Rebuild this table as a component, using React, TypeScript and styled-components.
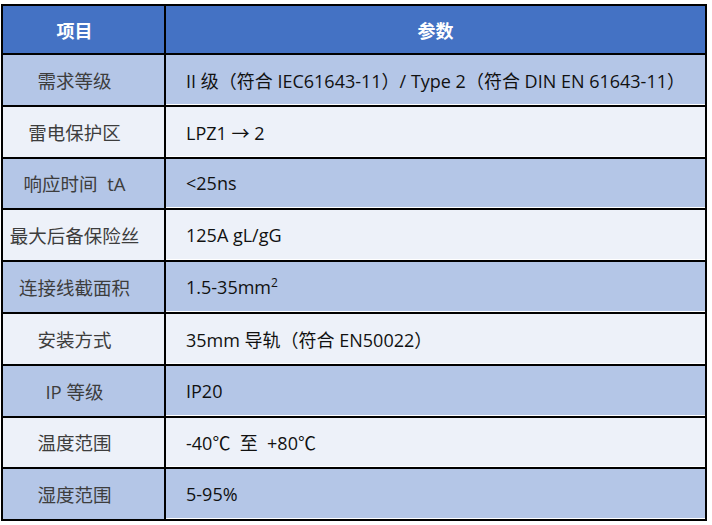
import React from "react";
import styled, { createGlobalStyle } from "styled-components";

interface SpecRow {
  label: string;
  value: React.ReactNode;
}

const GlobalStyle = createGlobalStyle`
  html, body {
    margin: 0;
    padding: 0;
    background: #ffffff;
  }
  body {
    font-family: "Open Sans", "Noto Sans CJK SC", sans-serif;
  }
`;

const Page = styled.div`
  padding: 4px 0 0 1px;
`;

const Grid = styled.div`
  width: 702px;
  display: grid;
  grid-template-columns: 161px 1fr;
  grid-template-rows: 47px;
  grid-auto-rows: 49.8px;
  gap: 2px;
  background: #000;
  border: 2px solid #000;
`;

const HeadCell = styled.div<{ $first?: boolean }>`
  display: flex;
  align-items: center;
  justify-content: center;
  padding-right: ${(p) => (p.$first ? "18px" : "0")};
  background: #4472c4;
  color: #ffffff;
  font-family: "Noto Sans CJK SC", sans-serif;
  font-size: 18px;
  font-weight: 700;
`;

const Cell = styled.div<{ $shade: boolean }>`
  display: flex;
  align-items: center;
  background: ${(p) => (p.$shade ? "#b4c6e7" : "#edf1f9")};
  white-space: pre;
`;

const LabelCell = styled(Cell)`
  justify-content: center;
  padding-right: 18px;
  color: #3d3d3d;
  font-size: 18.5px;
`;

const ValueCell = styled(Cell)`
  padding-left: 20px;
  color: #111;
  font-size: 18px;
  box-shadow: inset 0 -1px 0 #ffffff;
`;

const Sup = styled.sup`
  font-size: 12px;
  line-height: 0;
`;

const rows: SpecRow[] = [
  { label: "需求等级", value: "II 级（符合 IEC61643-11）/ Type 2（符合 DIN EN 61643-11）" },
  { label: "雷电保护区", value: "LPZ1 → 2" },
  { label: "响应时间  tA", value: "<25ns" },
  { label: "最大后备保险丝", value: "125A gL/gG" },
  {
    label: "连接线截面积",
    value: (
      <>
        1.5-35mm<Sup>2</Sup>
      </>
    ),
  },
  { label: "安装方式", value: "35mm 导轨（符合 EN50022）" },
  { label: "IP 等级", value: "IP20" },
  { label: "温度范围", value: "-40℃  至  +80℃" },
  { label: "湿度范围", value: "5-95%" },
];

const App: React.FC = () => {
  return (
    <Page>
      <GlobalStyle />
      <Grid>
        <HeadCell $first>项目</HeadCell>
        <HeadCell>参数</HeadCell>
        {rows.map((row, i) => (
          <React.Fragment key={row.label}>
            <LabelCell $shade={i % 2 === 0}>{row.label}</LabelCell>
            <ValueCell $shade={i % 2 === 0}>
              <span>{row.value}</span>
            </ValueCell>
          </React.Fragment>
        ))}
      </Grid>
    </Page>
  );
};

export default App;
